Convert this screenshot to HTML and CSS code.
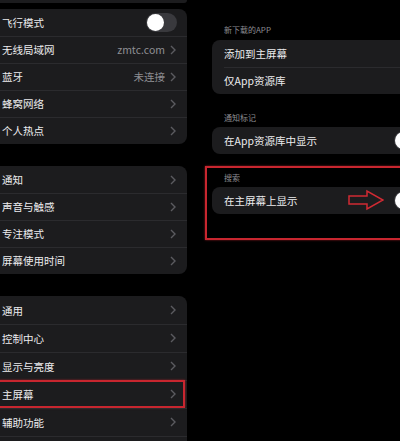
FILE: index.html
```html
<!DOCTYPE html>
<html lang="zh-CN">
<head>
    <meta charset="UTF-8">
    <meta name="viewport" content="width=device-width, initial-scale=1.0">
    <title>主屏幕设置</title>
    <link rel="stylesheet" href="styles.css">
</head>
<body>

<!-- Left: settings sidebar -->
<div class="sidebar">
    <div class="group stub"></div>

    <div class="group first">
        <div class="row">
            <span class="label">飞行模式</span>
            <span class="switch"><span class="knob"></span></span>
        </div>
        <div class="row">
            <span class="label">无线局域网</span>
            <span class="value">zmtc.com</span>
            <svg class="chev" viewBox="0 0 6 10"><polyline points="1,1 5,5 1,9"/></svg>
        </div>
        <div class="row">
            <span class="label">蓝牙</span>
            <span class="value">未连接</span>
            <svg class="chev" viewBox="0 0 6 10"><polyline points="1,1 5,5 1,9"/></svg>
        </div>
        <div class="row">
            <span class="label">蜂窝网络</span>
            <svg class="chev" viewBox="0 0 6 10"><polyline points="1,1 5,5 1,9"/></svg>
        </div>
        <div class="row">
            <span class="label">个人热点</span>
            <svg class="chev" viewBox="0 0 6 10"><polyline points="1,1 5,5 1,9"/></svg>
        </div>
    </div>

    <div class="group">
        <div class="row">
            <span class="label">通知</span>
            <svg class="chev" viewBox="0 0 6 10"><polyline points="1,1 5,5 1,9"/></svg>
        </div>
        <div class="row">
            <span class="label">声音与触感</span>
            <svg class="chev" viewBox="0 0 6 10"><polyline points="1,1 5,5 1,9"/></svg>
        </div>
        <div class="row">
            <span class="label">专注模式</span>
            <svg class="chev" viewBox="0 0 6 10"><polyline points="1,1 5,5 1,9"/></svg>
        </div>
        <div class="row">
            <span class="label">屏幕使用时间</span>
            <svg class="chev" viewBox="0 0 6 10"><polyline points="1,1 5,5 1,9"/></svg>
        </div>
    </div>

    <div class="group tall">
        <div class="row">
            <span class="label">通用</span>
            <svg class="chev" viewBox="0 0 6 10"><polyline points="1,1 5,5 1,9"/></svg>
        </div>
        <div class="row">
            <span class="label">控制中心</span>
            <svg class="chev" viewBox="0 0 6 10"><polyline points="1,1 5,5 1,9"/></svg>
        </div>
        <div class="row">
            <span class="label">显示与亮度</span>
            <svg class="chev" viewBox="0 0 6 10"><polyline points="1,1 5,5 1,9"/></svg>
        </div>
        <div class="row marked">
            <span class="label">主屏幕</span>
            <svg class="chev" viewBox="0 0 6 10"><polyline points="1,1 5,5 1,9"/></svg>
        </div>
        <div class="row">
            <span class="label">辅助功能</span>
            <svg class="chev" viewBox="0 0 6 10"><polyline points="1,1 5,5 1,9"/></svg>
        </div>
        <div class="row">
            <span class="label">墙纸</span>
            <svg class="chev" viewBox="0 0 6 10"><polyline points="1,1 5,5 1,9"/></svg>
        </div>
    </div>
</div>

<!-- Right: home screen detail -->
<div class="detail">
    <p class="section-title">新下载的APP</p>
    <div class="group">
        <div class="row">
            <span class="label">添加到主屏幕</span>
        </div>
        <div class="row">
            <span class="label">仅App资源库</span>
        </div>
    </div>

    <p class="section-title spaced">通知标记</p>
    <div class="group">
        <div class="row">
            <span class="label">在App资源库中显示</span>
            <span class="switch"><span class="knob"></span></span>
        </div>
    </div>

    <div class="highlight">
        <p class="section-title">搜索</p>
        <div class="group">
            <div class="row">
                <span class="label">在主屏幕上显示</span>
                <svg class="arrow" viewBox="0 0 36 22"><polygon points="1,7 19,7 19,2 35,11 19,20 19,15 1,15"/></svg>
                <span class="switch"><span class="knob"></span></span>
            </div>
        </div>
    </div>
</div>

</body>
</html>
```

FILE: styles.css
```css
body {
    margin: 0;
    width: 400px;
    height: 441px;
    overflow: hidden;
    background-color: #000;
    color: #ececee;
    font-family: "Noto Sans CJK SC", "Noto Sans", sans-serif;
    display: flex;
}
.sidebar {
    width: 197px;
    margin-left: -10px;
    flex-shrink: 0;
}
.group {
    background-color: #1c1c1e;
    border-radius: 8px;
    margin-top: 22px;
}
.group.stub {
    height: 3px;
    margin-top: 0;
    border-radius: 0 0 3px 3px;
}
.group.first {
    margin-top: 6px;
}
.row {
    position: relative;
    height: 27px;
    display: flex;
    align-items: center;
    padding: 0 10px 0 12px;
}
.tall .row {
    height: 28px;
}
.row + .row::before {
    content: "";
    position: absolute;
    top: 0;
    left: 0;
    right: 0;
    height: 1px;
    background-color: #2b2b2e;
}
.label {
    font-size: 10.5px;
    flex: 1;
    white-space: nowrap;
}
.value {
    font-size: 10.5px;
    color: #8e8e93;
    margin-right: 5px;
}
.chev {
    width: 6px;
    height: 10px;
    margin-right: 1px;
}
.chev polyline {
    fill: none;
    stroke: #5b5b60;
    stroke-width: 1.4;
}
.switch {
    width: 31px;
    height: 19px;
    border-radius: 10px;
    background-color: #39393d;
    display: flex;
    align-items: center;
    padding-left: 1px;
    box-sizing: border-box;
}
.knob {
    width: 17px;
    height: 17px;
    border-radius: 50%;
    background-color: #fff;
}
/* red annotation round the selected row */
.row.marked::after {
    content: "";
    position: absolute;
    top: 0;
    bottom: 0;
    left: -4px;
    right: 2px;
    border: 2px solid #c8262f;
    box-shadow: 0 0 2px rgba(200, 38, 47, 0.7);
}

.detail {
    margin-left: 25px;
    padding-top: 24px;
    width: 240px;
    flex-shrink: 0;
}
.detail .group {
    width: 225px;
    margin-top: 0;
}
.detail .row {
    padding-right: 12px;
}
.detail .row + .row::before {
    left: 12px;
}
.section-title {
    margin: 0 0 4px 12px;
    font-size: 8px;
    line-height: 12px;
    color: #8d8d92;
}
.section-title.spaced {
    margin-top: 18px;
    margin-bottom: 3px;
}
.highlight {
    margin: 12px 0 0 -7px;
    padding: 4px 0 24px 5px;
    width: 260px;
    border: 2px solid #c8262f;
    box-shadow: 0 0 2px rgba(200, 38, 47, 0.7);
}
.highlight .section-title {
    margin-bottom: 3px;
}
.arrow {
    position: absolute;
    left: 136px;
    top: 2px;
    width: 36px;
    height: 22px;
}
.arrow polygon {
    fill: none;
    stroke: #d02a33;
    stroke-width: 1.5;
}
```
